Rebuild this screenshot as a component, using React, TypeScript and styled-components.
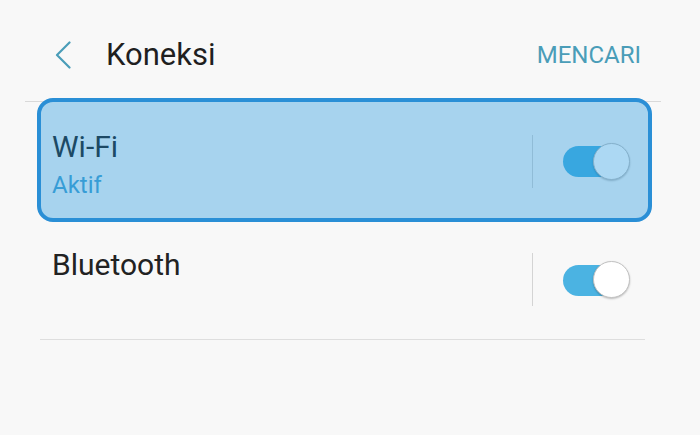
import React from 'react';
import styled, {createGlobalStyle} from "styled-components";

const GlobalStyle = createGlobalStyle`
    html, body {
        margin: 0;
        padding: 0;
        background: #f8f8f8;
    }
    body {
        font-family: Roboto, "Noto Sans", sans-serif;
        width: 700px;
        height: 435px;
        overflow: hidden;
    }
`

type Item = {
    title: string;
    status?: string;
    on: boolean;
    selected?: boolean;
}

const items: Item[] = [
    {title: "Wi-Fi", status: "Aktif", on: true, selected: true},
    {title: "Bluetooth", on: true},
];

export default function App() {
    return (
        <>
            <GlobalStyle/>
            <Screen>
                <Header>
                    <BackButton aria-label="Kembali">
                        <svg width="16" height="28" viewBox="0 0 16 28">
                            <polyline points="14.5,1.5 2,14 14.5,26.5" fill="none" stroke="#4a9db8"
                                      strokeWidth="2.2" strokeLinecap="round" strokeLinejoin="round"/>
                        </svg>
                    </BackButton>
                    <Title>Koneksi</Title>
                    <Action>MENCARI</Action>
                </Header>

                <List>
                    {items.map((item, i) => (
                        <Row key={item.title} last={i === items.length - 1}>
                            <TextBlock>
                                <RowTitle>{item.title}</RowTitle>
                                {item.status && <RowStatus>{item.status}</RowStatus>}
                            </TextBlock>
                            <Controls>
                                <Separator/>
                                <Switch on={item.on}>
                                    <Thumb/>
                                </Switch>
                            </Controls>
                            {item.selected && <Highlight/>}
                        </Row>
                    ))}
                </List>
            </Screen>
        </>
    );
}

const Screen = styled.div`
    width: 700px;
    height: 435px;
    background: #f8f8f8;
`

const Header = styled.header`
    box-sizing: border-box;
    height: 102px;
    margin: 0 39px 0 25px;
    padding: 9px 20px 0 30px;
    display: flex;
    align-items: center;
    border-bottom: 1px solid #d9d9d9;
`

const BackButton = styled.button`
    border: none;
    background: none;
    padding: 0;
    width: 16px;
    height: 28px;
    display: flex;
    margin-right: 35px;
    cursor: pointer;
`

const Title = styled.h1`
    margin: 0;
    flex: 1;
    font-size: 31px;
    font-weight: 400;
    color: #1f1f1f;
    line-height: 36px;
`

const Action = styled.span`
    font-size: 24px;
    color: #4a9db8;
    line-height: 28px;
`

const List = styled.div`
    margin: 0 55px 0 40px;
`

const Row = styled.div<{ last?: boolean }>`
    position: relative;
    box-sizing: border-box;
    height: ${p => p.last ? "120px" : "118px"};
    padding: 0 15px 0 12px;
    display: flex;
    justify-content: space-between;
    border-bottom: ${p => p.last ? "1px solid #dedede" : "none"};
`

const TextBlock = styled.div`
    padding-top: 27px;
    display: flex;
    flex-direction: column;
    gap: 6px;
`

const RowTitle = styled.span`
    font-size: 30px;
    line-height: 36px;
    color: #222;
`

const RowStatus = styled.span`
    font-size: 24px;
    line-height: 28px;
    color: #4aa3d2;
`

const Controls = styled.div`
    display: flex;
    align-items: center;
    gap: 30px;
`

const Separator = styled.div`
    width: 1px;
    height: 53px;
    background: #d4d4d4;
`

const Switch = styled.div<{ on: boolean }>`
    position: relative;
    width: 67px;
    height: 38px;
    display: flex;
    align-items: center;
    justify-content: ${p => p.on ? "flex-end" : "flex-start"};

    &::before {
        content: "";
        position: absolute;
        left: 0;
        top: 4px;
        width: 54px;
        height: 31px;
        border-radius: 16px;
        background: ${p => p.on ? "#4bb3e2" : "#c4c4c4"};
    }
`

const Thumb = styled.span`
    position: relative;
    box-sizing: border-box;
    width: 37px;
    height: 37px;
    border-radius: 50%;
    background: #fff;
    border: 1px solid #c2c2c2;
    box-shadow: 0 1px 2px rgba(0, 0, 0, 0.25);
`

const Highlight = styled.div`
    position: absolute;
    top: -4px;
    left: -3px;
    right: -7px;
    bottom: -2px;
    border: 4px solid #2a8fd6;
    border-radius: 16px;
    background: rgba(22, 146, 220, 0.355);
    pointer-events: none;
`
